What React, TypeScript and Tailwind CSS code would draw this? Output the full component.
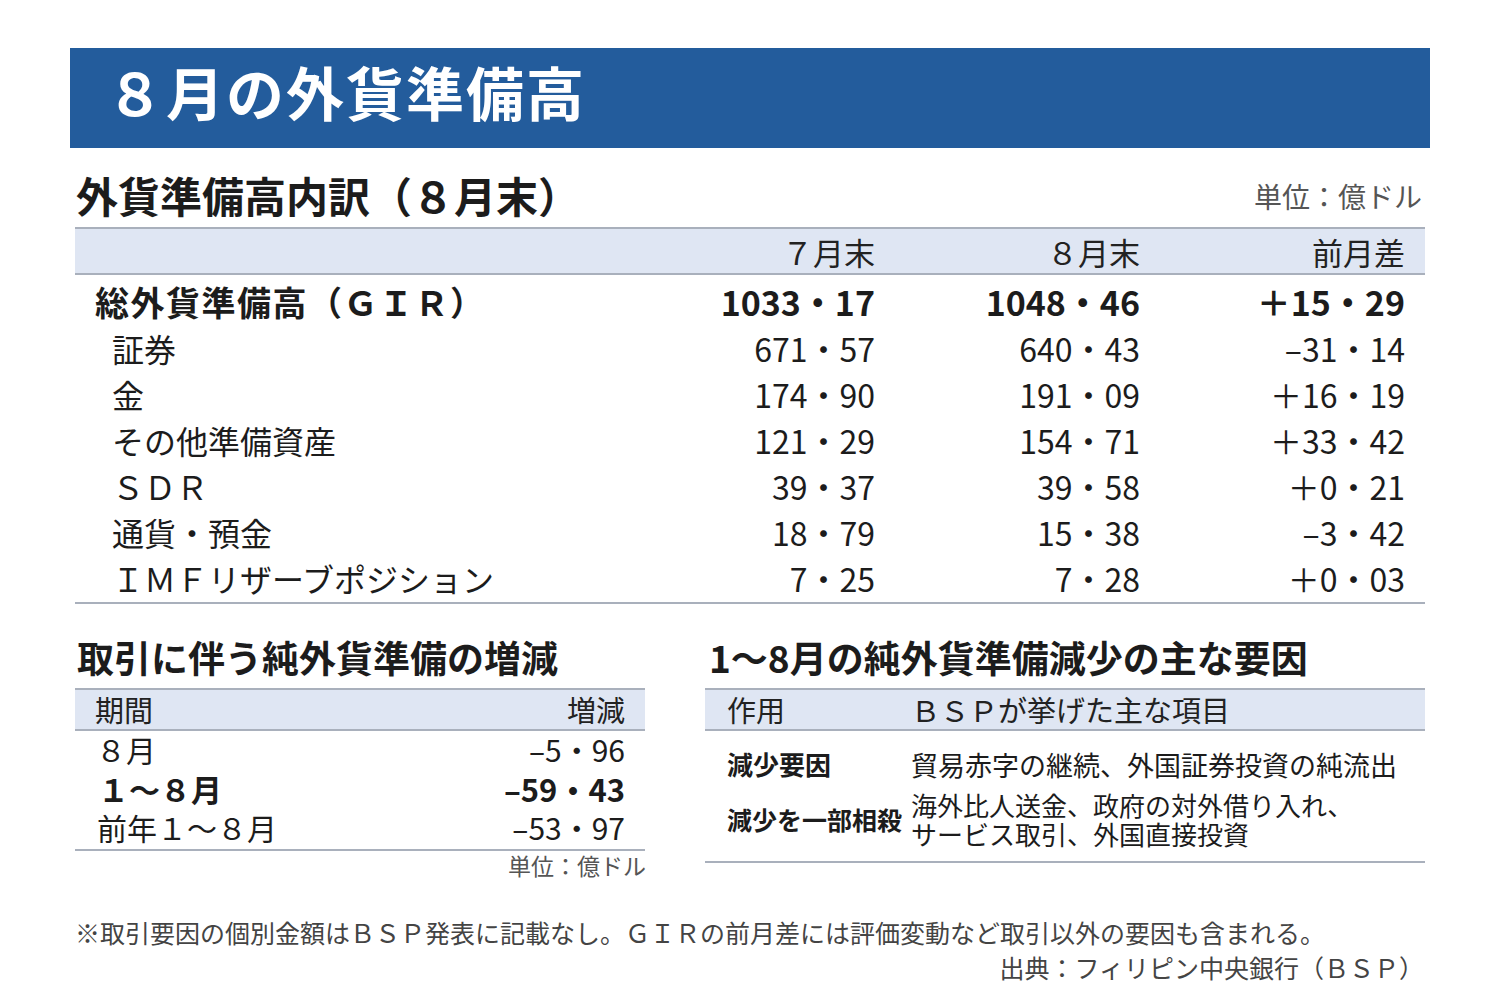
const rows = [
  { label: "証券", jul: "671・57", aug: "640・43", diff: "–31・14" },
  { label: "金", jul: "174・90", aug: "191・09", diff: "＋16・19" },
  { label: "その他準備資産", jul: "121・29", aug: "154・71", diff: "＋33・42" },
  { label: "ＳＤＲ", jul: "39・37", aug: "39・58", diff: "＋0・21" },
  { label: "通貨・預金", jul: "18・79", aug: "15・38", diff: "–3・42" },
  { label: "ＩＭＦリザーブポジション", jul: "7・25", aug: "7・28", diff: "＋0・03" },
];

const netRows = [
  { label: "８月", value: "–5・96", bold: false, indent: "pl-[21px]" },
  { label: "１～８月", value: "–59・43", bold: true, indent: "pl-[23px]" },
  { label: "前年１～８月", value: "–53・97", bold: false, indent: "pl-[22px]" },
];

const App = () => {
  return (
    <div className="w-[1500px] h-[1000px] bg-white pt-[48px] pl-[70px] text-[#1c1c1c] font-['Noto_Sans_CJK_JP',sans-serif]">
      {/* banner */}
      <div className="w-[1360px] h-[100px] bg-[#235c9c] flex items-center pl-[36px] pb-[14px]">
        <h1 className="text-[58px] leading-none font-bold text-white tracking-[2px]">８月の外貨準備高</h1>
      </div>

      <div className="w-[1360px] pl-[5px] pr-[5px]">
        {/* section heading */}
        <div className="mt-[27px] mb-[12px] h-[40px] flex items-center justify-between">
          <h2 className="text-[42px] leading-none font-bold ml-[1px]">外貨準備高内訳（８月末）</h2>
          <span className="text-[28px] leading-none text-[#555] mr-[3px] mt-[1px]">単位：億ドル</span>
        </div>

        {/* main table */}
        <div className="border-t-2 border-b-2 border-[#a9b0bc] bg-[#dfe6f3] h-[48px] grid grid-cols-[535px_265px_265px_265px] pr-[20px] items-center text-[31px] leading-none text-[#222]">
          <span />
          <span className="text-right">７月末</span>
          <span className="text-right">８月末</span>
          <span className="text-right">前月差</span>
        </div>
        <div className="pt-[4px] pb-[1px] border-b-2 border-[#a9b0bc]">
          <div className="h-[46px] grid grid-cols-[535px_265px_265px_265px] pr-[20px] items-center text-[34px] leading-none font-bold">
            <span className="pl-[20px] tracking-[1.5px] whitespace-nowrap">総外貨準備高（ＧＩＲ）</span>
            <span className="text-right">1033・17</span>
            <span className="text-right">1048・46</span>
            <span className="text-right">＋15・29</span>
          </div>
          {rows.map((r) => (
            <div
              key={r.label}
              className="h-[46px] grid grid-cols-[535px_265px_265px_265px] pr-[20px] items-center text-[32px] leading-none"
            >
              <span className="pl-[37px]">{r.label}</span>
              <span className="text-right">{r.jul}</span>
              <span className="text-right">{r.aug}</span>
              <span className="text-right">{r.diff}</span>
            </div>
          ))}
        </div>

        {/* lower sections */}
        <div className="mt-[35px] flex gap-[60px]">
          <div className="w-[570px]">
            <h3 className="h-[37px] text-[37px] leading-none font-bold ml-[2px] mb-[12px] whitespace-nowrap">
              取引に伴う純外貨準備の増減
            </h3>
            <div className="border-t-2 border-b-2 border-[#a9b0bc] bg-[#dfe6f3] h-[43px] flex items-center justify-between px-[20px] text-[29px] leading-none text-[#222]">
              <span>期間</span>
              <span>増減</span>
            </div>
            <div className="border-b-2 border-[#a9b0bc] pt-[1px]">
              {netRows.map((r) => (
                <div
                  key={r.label}
                  className={`h-[39px] pb-[5px] flex items-center justify-between pr-[20px] leading-none ${r.indent} ${
                    r.bold ? "font-bold text-[31px]" : "text-[30px]"
                  }`}
                >
                  <span>{r.label}</span>
                  <span>{r.value}</span>
                </div>
              ))}
            </div>
            <div className="mt-[3px] h-[23px] text-right text-[23px] leading-none text-[#555] -mr-[1px]">単位：億ドル</div>
          </div>

          <div className="w-[720px]">
            <h3 className="h-[37px] text-[37px] leading-none font-bold ml-[4px] mb-[12px] whitespace-nowrap">
              1～8月の純外貨準備減少の主な要因
            </h3>
            <div className="border-t-2 border-b-2 border-[#a9b0bc] bg-[#dfe6f3] h-[43px] flex items-center pl-[22px] text-[29px] leading-none text-[#222]">
              <span className="w-[184px]">作用</span>
              <span>ＢＳＰが挙げた主な項目</span>
            </div>
            <div className="border-b-2 border-[#a9b0bc] pb-[13px] pl-[22px]">
              <div className="mt-[19px] h-[28px] flex items-center">
                <span className="w-[184px] text-[26px] font-bold leading-none">減少要因</span>
                <span className="text-[27px] leading-none">貿易赤字の継続、外国証券投資の純流出</span>
              </div>
              <div className="mt-[12px] flex items-center">
                <span className="w-[184px] text-[25px] font-bold leading-none whitespace-nowrap">減少を一部相殺</span>
                <span className="text-[26px] leading-[29px]">
                  海外比人送金、政府の対外借り入れ、
                  <br />
                  サービス取引、外国直接投資
                </span>
              </div>
            </div>
          </div>
        </div>

        {/* footnotes */}
        <p className="mt-[43px] h-[25px] text-[25px] leading-none text-[#444] whitespace-nowrap">
          ※取引要因の個別金額はＢＳＰ発表に記載なし。ＧＩＲの前月差には評価変動など取引以外の要因も含まれる。
        </p>
        <p className="mt-[10px] h-[25px] text-right text-[25px] leading-none text-[#444] pr-[1px]">
          出典：フィリピン中央銀行（ＢＳＰ）
        </p>
      </div>
    </div>
  );
};

export default App;
